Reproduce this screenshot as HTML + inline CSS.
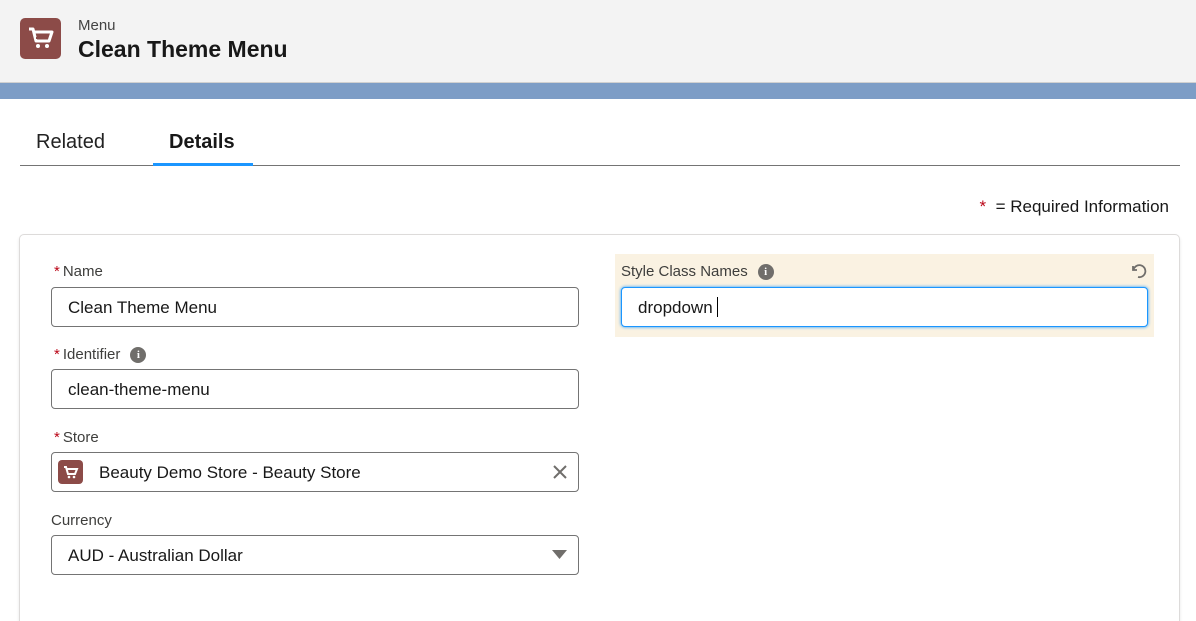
<!DOCTYPE html>
<html style="width:1196px;height:621px;overflow:hidden"><head><style>
*{box-sizing:border-box;margin:0;padding:0}
body{width:1196px;height:621px;overflow:hidden;background:#fff;font-family:"Liberation Sans",sans-serif;color:#181818;position:relative}
.hdr{position:absolute;left:0;top:0;width:1196px;height:83px;background:#f3f3f3;border-bottom:1px solid #d0d0d0;box-shadow:0 2px 2px rgba(0,0,0,.08)}
.band{position:absolute;left:0;top:83px;width:1196px;height:16px;background:#7d9dc6}
.ico{position:absolute;left:20px;top:18px;width:41px;height:41px;border-radius:5px;background:#8c4b48}
.a{position:absolute;white-space:nowrap}
.lbl{font-size:15px;color:#3e3e3c}
.req{color:#ba0517;margin-right:3px}
.inp{position:absolute;border:1px solid #747474;border-radius:4px;height:40px;font-size:17px;padding-left:16px;line-height:39px;background:#fff}
.info{display:inline-block;width:16px;height:16px;border-radius:50%;background:#706e6b;color:#fff;font-size:11px;font-weight:bold;text-align:center;line-height:16px;vertical-align:1px;margin-left:10px;font-family:"Liberation Serif",serif}
</style></head><body>
<div class="hdr"></div>
<div class="band"></div>
<div class="ico"><svg width="41" height="41" viewBox="0 0 41 41"><path d="M9 11h4l3 12h13l3-9H14" fill="none" stroke="#fff" stroke-width="3" stroke-linejoin="round"/><rect x="16" y="19" width="12" height="2" fill="#8c4b48"/><circle cx="18" cy="28" r="2" fill="#fff"/><circle cx="27" cy="28" r="2" fill="#fff"/></svg></div>
<div class="a" style="left:78px;top:17px;font-size:15px;color:#444">Menu</div>
<div class="a" style="left:78px;top:36px;font-size:23px;font-weight:bold">Clean Theme Menu</div>
<div class="a" style="left:36px;top:131px;font-size:20px;color:#222">Related</div>
<div class="a" style="left:169px;top:131px;font-size:20px;font-weight:bold">Details</div>
<div class="a" style="left:20px;top:165px;width:1160px;height:1px;background:#747474"></div>
<div class="a" style="left:153px;top:163px;width:100px;height:3px;background:#1b96ff"></div>
<div class="a" style="right:27px;top:197px;font-size:17px"><span style="color:#ba0517">*</span>&nbsp; = Required Information</div>
<div class="a" style="left:19px;top:234px;width:1161px;height:395px;border:1px solid #dddbda;border-radius:5px;box-shadow:0 2px 3px rgba(0,0,0,.1)"></div>
<div class="a lbl" style="left:54px;top:263px"><span class="req">*</span>Name</div>
<div class="inp" style="left:51px;top:287px;width:528px">Clean Theme Menu</div>
<div class="a lbl" style="left:54px;top:346px"><span class="req">*</span>Identifier<span class="info">i</span></div>
<div class="inp" style="left:51px;top:369px;width:528px">clean-theme-menu</div>
<div class="a lbl" style="left:54px;top:429px"><span class="req">*</span>Store</div>
<div class="inp" style="left:51px;top:452px;width:528px;padding-left:47px">Beauty Demo Store - Beauty Store</div>
<div class="a" style="left:58px;top:460px;width:25px;height:24px;border-radius:4px;background:#8c4b48"><svg width="25" height="24" viewBox="0 0 25 24"><path d="M6 7h2l2 7h7l2-5H9" fill="none" stroke="#fff" stroke-width="2"/><circle cx="11" cy="17" r="1.3" fill="#fff"/><circle cx="16" cy="17" r="1.3" fill="#fff"/></svg></div>
<svg class="a" style="left:553px;top:465px" width="14" height="14"><path d="M1 1L13 13M13 1L1 13" stroke="#706e6b" stroke-width="2"/></svg>
<div class="a lbl" style="left:51px;top:512px">Currency</div>
<div class="inp" style="left:51px;top:535px;width:528px">AUD - Australian Dollar</div>
<svg class="a" style="left:552px;top:550px" width="15" height="10"><path d="M0 0H15L7.5 9Z" fill="#706e6b"/></svg>
<div class="a" style="left:615px;top:254px;width:539px;height:83px;background:#faf2e2"></div>
<div class="a lbl" style="left:621px;top:263px">Style Class Names<span class="info">i</span></div>
<svg class="a" style="left:1129px;top:262px" width="18" height="18" viewBox="0 0 18 18"><path d="M4 4v4h4M4.5 8A6 6 0 1 1 9 15" fill="none" stroke="#706e6b" stroke-width="1.8"/></svg>
<div class="inp" style="left:621px;top:287px;width:527px;border:1px solid #1b96ff;box-shadow:0 0 3px #1b96ff">dropdown <span style="display:inline-block;width:1px;height:20px;background:#000;vertical-align:-4px"></span></div>
</body></html>
